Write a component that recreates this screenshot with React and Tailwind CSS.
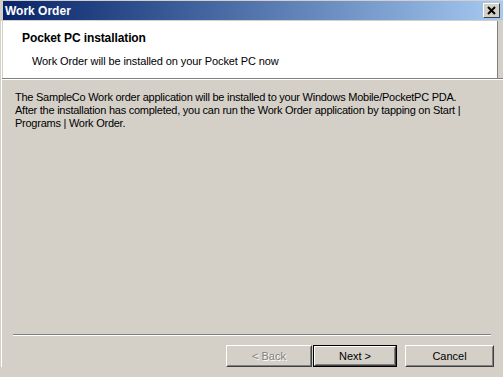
import React from 'react';

const WinButton = ({ children, disabled, isDefault, className = '' }) => {
  const face = (
    <div className="h-full w-full border border-t-white border-l-white border-b-[#404040] border-r-[#404040]">
      <div className="flex h-full w-full items-center justify-center border border-t-[#d4d0c8] border-l-[#d4d0c8] border-b-[#808080] border-r-[#808080]">
        <span className={disabled ? 'text-[#808080] [text-shadow:1px_1px_0_#ffffff]' : 'text-black'}>{children}</span>
      </div>
    </div>
  );
  return (
    <div className={`h-[22px] ${isDefault ? 'border border-black' : ''} ${className}`}>
      {face}
    </div>
  );
};

export default function App() {
  return (
    <div className="w-[503px] h-[377px] overflow-hidden bg-[#d4d0c8] pt-[1px] font-['Liberation_Sans',Arial,sans-serif] text-[11px] text-black">
      {/* Title bar */}
      <div className="ml-[3px] flex h-[19px] items-center justify-between bg-gradient-to-r from-[#0a246a] to-[#a6caf0] pl-[2px] pr-[3px]">
        <span className="font-bold text-[12px] text-white">Work Order</span>
        <div className="h-[15px] w-[17px] border border-t-white border-l-white border-b-[#404040] border-r-[#404040] bg-[#d4d0c8]">
          <svg width="15" height="13" viewBox="0 0 15 13">
            <path d="M4 3 L11 10 M11 3 L4 10" stroke="#000" strokeWidth="2" />
          </svg>
        </div>
      </div>

      <div className="mt-[1px] ml-[1px] border-l border-white">
        {/* Header */}
        <div className="ml-[1px] mr-[5px] h-[57px] bg-white border-r border-[#808080]">
          <div className="pl-[19px] pt-[10px] text-[12px] leading-[14px] font-bold tracking-[-0.1px]">Pocket PC installation</div>
          <div className="pl-[29px] pt-[10px] leading-[13px] tracking-[-0.1px]">Work Order will be installed on your Pocket PC now</div>
        </div>
        <div className="h-px bg-[#808080]" />
        <div className="h-px bg-white" />

        {/* Body */}
        <div className="flex flex-col">
          <p className="pl-[13px] pt-[11px] leading-[13px] whitespace-nowrap tracking-[-0.25px]">
            The SampleCo Work order application will be installed to your Windows Mobile/PocketPC PDA.
            <br />
            After the installation has completed, you can run the Work Order application by tapping on Start |
            <br />
            Programs | Work Order.
          </p>
          <div className="mt-[204px] ml-[11px] mr-[12px]">
            <div className="h-px bg-[#808080]" />
            <div className="h-px bg-white" />
          </div>
          <div className="mt-[9px] flex pl-[224px]">
            <WinButton disabled className="w-[86px]">&lt; Back</WinButton>
            <WinButton isDefault className="ml-[1px] w-[84px]">Next &gt;</WinButton>
            <WinButton className="ml-[8px] w-[89px]">Cancel</WinButton>
          </div>
        </div>
      </div>
    </div>
  );
}
